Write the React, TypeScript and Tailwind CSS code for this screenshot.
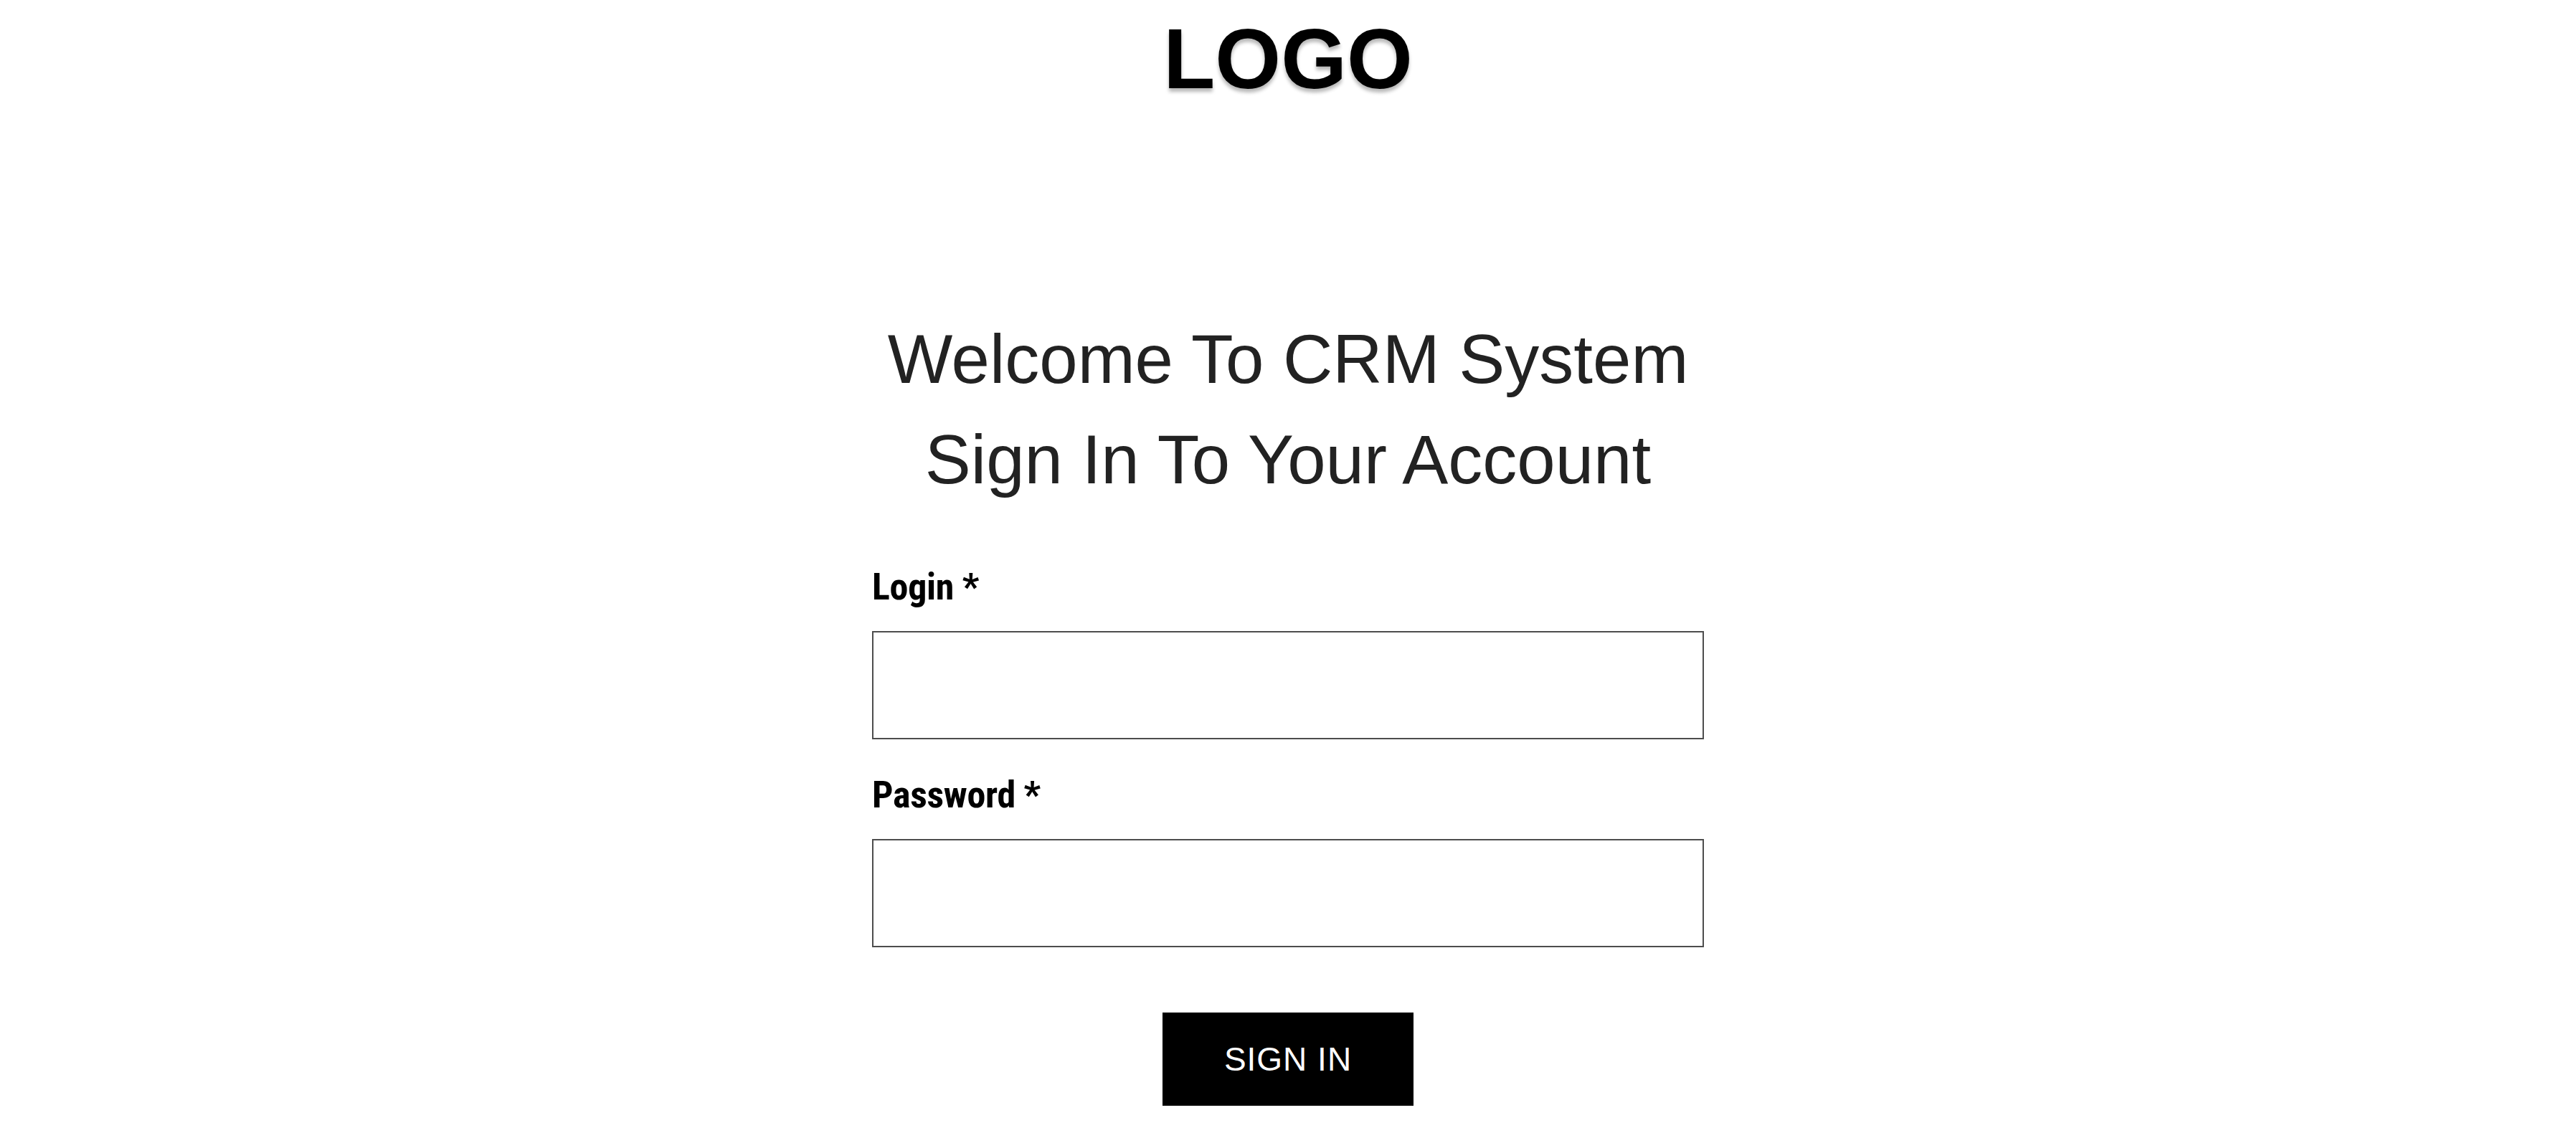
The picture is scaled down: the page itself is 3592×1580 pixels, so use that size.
import { useState } from "react";

const Field = ({
  label,
  type,
  value,
  onChange,
  className = "",
}: {
  label: string;
  type: string;
  value: string;
  onChange: (v: string) => void;
  className?: string;
}) => (
  <div className={`flex flex-col ${className}`}>
    <label className="font-['Roboto',sans-serif] font-bold font-stretch-condensed text-[52px] leading-[62px] text-black tracking-[-0.3px]">
      {label} *
    </label>
    <input
      type={type}
      value={value}
      onChange={(e) => onChange(e.target.value)}
      className="mt-[30px] h-[151px] w-full border-2 border-[#4d4d4d] bg-white px-6 text-[48px] outline-none"
    />
  </div>
);

const App = () => {
  const [login, setLogin] = useState("");
  const [password, setPassword] = useState("");

  return (
    <main className="min-h-screen bg-white flex flex-col items-center font-['Liberation_Sans',Arial,sans-serif]">
      <h1 className="pt-[23px] text-[118px] leading-none font-bold text-black [text-shadow:0_5px_5px_rgba(0,0,0,0.28)]">
        LOGO
      </h1>

      <div className="mt-[290px] text-center text-[96px] leading-[140px] text-[#222]">
        <p>Welcome To CRM System</p>
        <p>Sign In To Your Account</p>
      </div>

      <form
        className="mt-[77px] w-[1160px] flex flex-col"
        onSubmit={(e) => e.preventDefault()}
      >
        <Field label="Login" type="text" value={login} onChange={setLogin} />
        <Field
          label="Password"
          type="password"
          value={password}
          onChange={setPassword}
          className="mt-[47px]"
        />
        <button
          type="submit"
          className="mt-[91px] self-center w-[350px] h-[130px] bg-black text-white text-[46px] tracking-[1px] uppercase"
        >
          Sign In
        </button>
      </form>
    </main>
  );
};

export default App;
